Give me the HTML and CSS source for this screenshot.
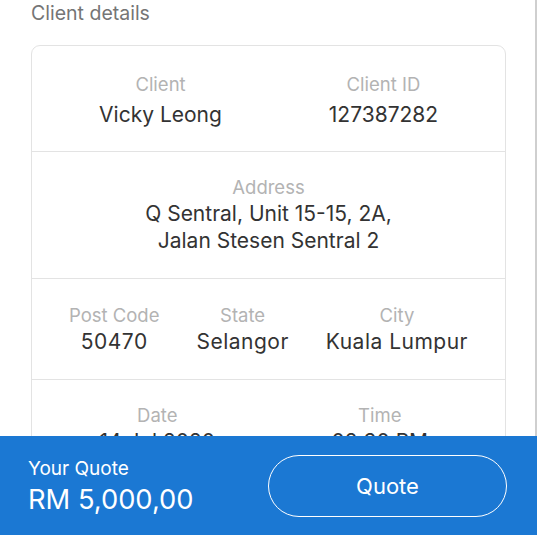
FILE: index.html
```html
<!DOCTYPE html>
<html lang="en">
<head>
<meta charset="utf-8">
<title>Client details</title>
<link rel="stylesheet" href="styles.css">
</head>
<body>
<div class="page">
  <h2 class="section-title">Client details</h2>
  <div class="card">
    <div class="row row--two row--first">
      <div class="field"><div class="label">Client</div><div class="value">Vicky Leong</div></div>
      <div class="field"><div class="label">Client ID</div><div class="value">127387282</div></div>
    </div>
    <div class="row row--one">
      <div class="field"><div class="label">Address</div><div class="value">Q Sentral, Unit 15-15, 2A,<br>Jalan Stesen Sentral 2</div></div>
    </div>
    <div class="row row--three">
      <div class="field"><div class="label">Post Code</div><div class="value">50470</div></div>
      <div class="field"><div class="label">State</div><div class="value">Selangor</div></div>
      <div class="field"><div class="label">City</div><div class="value">Kuala Lumpur</div></div>
    </div>
    <div class="row row--two">
      <div class="field"><div class="label">Date</div><div class="value">14 Jul 2020</div></div>
      <div class="field"><div class="label">Time</div><div class="value">02:30 PM</div></div>
    </div>
  </div>
</div>
<footer class="quote-bar">
  <div class="quote-info">
    <div class="quote-label">Your Quote</div>
    <div class="quote-amount">RM 5,000,00</div>
  </div>
  <button class="quote-btn">Quote</button>
</footer>
</body>
</html>
```

FILE: styles.css
```css
* { box-sizing: border-box; }
html, body { margin: 0; padding: 0; background: #fff; }
body {
  font-family: Inter, "Noto Sans", sans-serif;
  color: #333;
  height: 535px;
  overflow: hidden;
  border-right: 2px solid #cfcfcf;
}
.page {
  padding: 1px 29px 0 31px;
}
.section-title {
  margin: 0;
  font-weight: 400;
  font-size: 19.5px;
  line-height: 24px;
  color: #757575;
}
.card {
  margin-top: 20px;
  border: 1px solid #e3e3e3;
  border-radius: 9px;
}
.row {
  padding: 24px 14px 24px;
  border-top: 1px solid #e3e3e3;
  text-align: center;
}
.row:first-child { border-top: none; }
.row--first { padding: 27px 10px 23px 17px; }
.row--first .label { margin-bottom: 6px; }
.row--two {
  display: grid;
  grid-template-columns: 1fr 1fr;
}
.row--three {
  display: flex;
  justify-content: space-evenly;
  padding: 25px 0 24px;
}
.row--three .value { letter-spacing: 0.5px; }
.label {
  font-size: 18.5px;
  line-height: 22px;
  color: #b3b3b3;
  margin-bottom: 2px;
}
.value {
  font-size: 21px;
  line-height: 27px;
  color: #333;
}
.quote-bar {
  position: fixed;
  left: 0;
  right: 0;
  bottom: 0;
  height: 99px;
  background: #1b78d3;
  display: flex;
  align-items: center;
  justify-content: space-between;
  padding: 0 30px 0 28px;
  color: #fff;
}
.quote-info { display: flex; flex-direction: column; margin-top: 4px; }
.quote-label { font-size: 19px; line-height: 24px; }
.quote-amount { font-size: 27.3px; line-height: 38px; }
.quote-btn {
  width: 239px;
  height: 62px;
  border: 1.5px solid #fff;
  border-radius: 31px;
  background: transparent;
  color: #fff;
  font-family: inherit;
  font-size: 22px;
}
```
